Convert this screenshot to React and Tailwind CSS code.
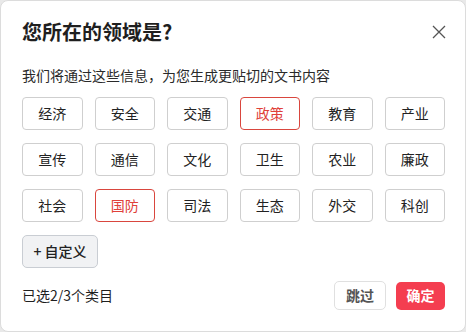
import React, { useState } from 'react';

const FIELDS = [
  '经济', '安全', '交通', '政策', '教育', '产业',
  '宣传', '通信', '文化', '卫生', '农业', '廉政',
  '社会', '国防', '司法', '生态', '外交', '科创',
];

const App = () => {
  const [selected, setSelected] = useState(['政策', '国防']);

  const toggle = (name) => {
    if (selected.includes(name)) {
      setSelected(selected.filter((s) => s !== name));
    } else if (selected.length < 3) {
      setSelected([...selected, name]);
    }
  };

  return (
    <div className="w-[466px] h-[332px] bg-[#e9e9e9] font-['Noto_Sans_CJK_SC','Noto_Sans',sans-serif]">
      <div className="w-full h-full bg-white rounded-lg border border-[#dcdcdc] flex flex-col pl-[21px] pr-[20px]">
        <div className="flex items-center justify-between pt-[16px] h-[46px]">
          <h2 className="text-[20px] font-bold text-[#1f1f1f] leading-none">您所在的领域是?</h2>
          <button className="w-[16px] h-[16px] flex items-center justify-center text-[#555] mr-[-2px]">
            <svg width="14" height="14" viewBox="0 0 14 14" fill="none" stroke="currentColor" strokeWidth="1.3">
              <path d="M1 1L13 13M13 1L1 13" />
            </svg>
          </button>
        </div>

        <p className="mt-[18px] text-[14px] leading-[20px] text-[#2a2a2a]">我们将通过这些信息，为您生成更贴切的文书内容</p>

        <div className="grid grid-cols-6 gap-x-[12px] gap-y-[13px] mt-[12px]">
          {FIELDS.map((name) => {
            const on = selected.includes(name);
            return (
              <button
                key={name}
                onClick={() => toggle(name)}
                className={`h-[33px] rounded-[4px] border text-[14px] bg-white ${
                  on ? 'border-[#d9463e] text-[#e0413a]' : 'border-[#cfcfcf] text-[#222]'
                }`}
              >
                {name}
              </button>
            );
          })}
        </div>

        <div className="mt-[13px]">
          <button className="h-[33px] w-[76px] rounded-[5px] border border-[#c9cdd3] bg-[#f1f2f4] text-[14px] font-medium text-[#222]">
            + 自定义
          </button>
        </div>

        <div className="flex items-center justify-between mt-[13px]">
          <span className="text-[14px] text-[#1f1f1f]">已选{selected.length}/3个类目</span>
          <div className="flex items-center gap-[10px]">
            <button className="h-[29px] w-[52px] rounded-[5px] border border-[#e0e0e0] bg-white text-[14px] font-bold text-[#555]">
              跳过
            </button>
            <button className="h-[28px] w-[49px] rounded-[5px] bg-[#f43e50] text-[14px] font-bold text-white">
              确定
            </button>
          </div>
        </div>
      </div>
    </div>
  );
};

export default App;
